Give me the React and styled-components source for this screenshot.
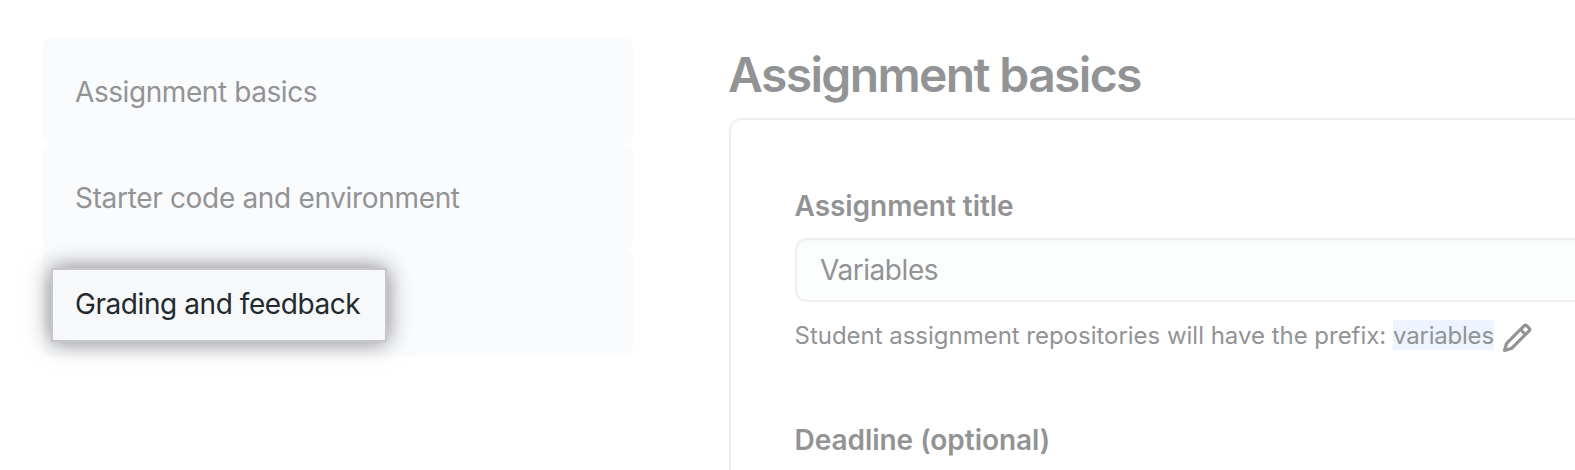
import React from "react";
import styled, { createGlobalStyle, css } from "styled-components";

const GlobalStyle = createGlobalStyle`
  *, *::before, *::after { box-sizing: border-box; }
  body {
    margin: 0;
    background: #fff;
    color: #929395;
    font-family: Inter, "Liberation Sans", sans-serif;
    font-size: 28px;
    overflow: hidden;
  }
`;

const Page = styled.div`
  display: flex;
  align-items: flex-start;
  height: 470px;
  overflow: hidden;
  padding-left: 43px;
`;

const Nav = styled.nav`
  display: flex;
  flex: none;
  flex-direction: column;
  width: 590px;
  margin: 38px 96px 0 0;
`;

const NavItem = styled.div`
  display: flex;
  align-items: center;
  height: 106px;
  padding: 4px 8px 0;
  border-radius: 8px;
  background: #fafbfd;
`;

const NavLink = styled.a`
  height: 74px;
  padding: 0 24px;
  border: 2px solid transparent;
  border-left-width: 0;
  line-height: 68px;
  white-space: nowrap;
  letter-spacing: ${(p) => p.$tracking};
  ${(p) =>
    p.$active &&
    css`
      border: 2px solid #c6c7c9;
      padding: 0 25px 0 22px;
      background: #f6f8fa;
      color: #24292e;
      box-shadow: 0 0 22px rgba(0, 0, 0, 0.5);
    `}
`;

const Main = styled.main`
  flex: none;
  width: 1000px;
  padding-top: 46px;
`;

const Heading = styled.h1`
  margin: 0 0 0 -1px;
  height: 72px;
  font-size: 48px;
  font-weight: 600;
  line-height: 58px;
  letter-spacing: -1.63px;
  white-space: nowrap;
`;

const Card = styled.section`
  height: 420px;
  padding: 65px 64px 0;
  border: 2px solid #efefef;
  border-radius: 12px;
`;

const Label = styled.label`
  display: block;
  height: 53px;
  margin-left: -0.5px;
  font-weight: 600;
  line-height: 42px;
  letter-spacing: ${(p) => p.$tracking};
  white-space: nowrap;
`;

const Field = styled.div`
  height: 64px;
  padding: 0 23px;
  border: 2px solid #eef0f0;
  border-radius: 12px;
  background: #fcfefd;
  box-shadow: inset 0 2px 0 #f9fbfb;
  line-height: 60px;
  letter-spacing: -0.45px;
`;

const Hint = styled.div`
  display: flex;
  align-items: flex-start;
  height: 99px;
  margin: 18px 0 0 -0.5px;
  font-size: 24px;
  line-height: 31px;
  letter-spacing: -0.02px;
  white-space: pre;
`;

const Prefix = styled.span`
  height: 30px;
  background: #edf3ff;
  letter-spacing: -0.2px;
`;

const PencilIcon = styled.svg`
  width: 32px;
  height: 32px;
  margin: 2px 0 0 7.5px;
  fill: #929395;
  stroke: #929395;
  stroke-width: 0.1;
`;

function Pencil() {
  return (
    <PencilIcon viewBox="0 0 16 16" aria-hidden="true">
      <path d="M11.013 1.427a1.75 1.75 0 0 1 2.474 0l1.086 1.086a1.75 1.75 0 0 1 0 2.474l-8.61 8.61c-.21.21-.47.364-.756.445l-3.251.93a.75.75 0 0 1-.927-.928l.929-3.25c.081-.286.235-.547.445-.758l8.61-8.61Zm.176 4.823L9.75 4.81l-6.286 6.287a.253.253 0 0 0-.064.108l-.558 1.953 1.953-.558a.253.253 0 0 0 .108-.064Zm1.238-3.763a.25.25 0 0 0-.354 0L10.811 3.75l1.439 1.44 1.263-1.263a.25.25 0 0 0 0-.354Z" />
    </PencilIcon>
  );
}

export default function App() {
  return (
    <>
      <GlobalStyle />
      <Page>
        <Nav>
          <NavItem><NavLink $tracking="-0.42px">Assignment basics</NavLink></NavItem>
          <NavItem><NavLink $tracking="-0.33px">Starter code and environment</NavLink></NavItem>
          <NavItem><NavLink $active $tracking="-0.43px">Grading and feedback</NavLink></NavItem>
        </Nav>
        <Main>
          <Heading>Assignment basics</Heading>
          <Card>
            <Label $tracking="-0.04px">Assignment title</Label>
            <Field>Variables</Field>
            <Hint>
              <span>Student assignment repositories will have the prefix: </span>
              <Prefix>variables</Prefix>
              <Pencil />
            </Hint>
            <Label $tracking="-0.04px">Deadline (optional)</Label>
          </Card>
        </Main>
      </Page>
    </>
  );
}
